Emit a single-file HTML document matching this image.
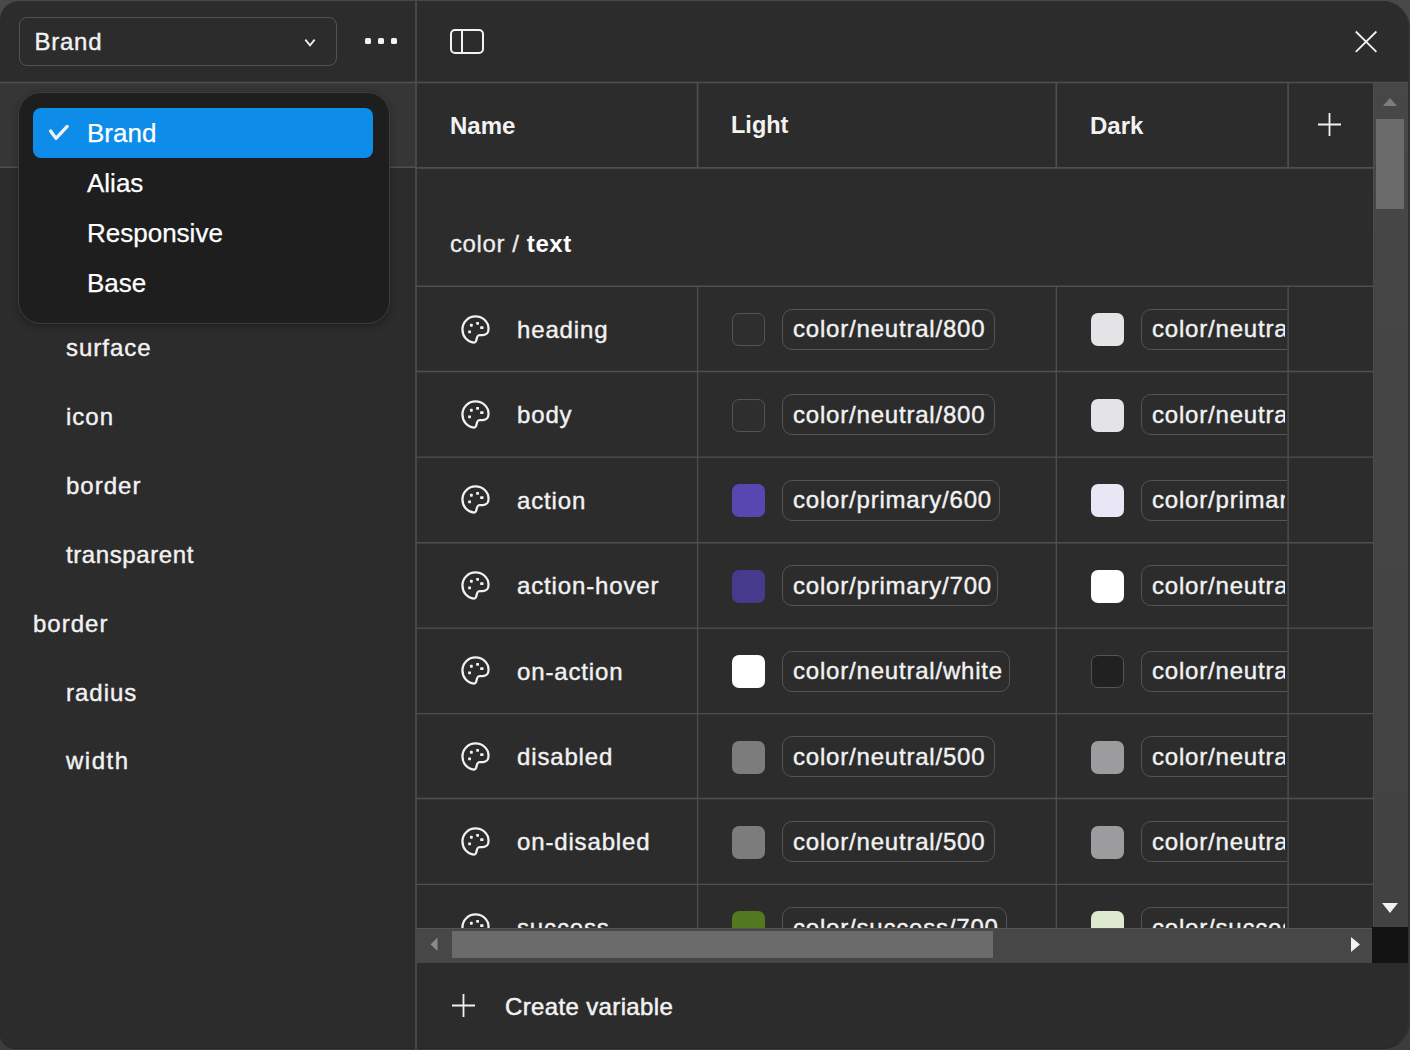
<!DOCTYPE html>
<html><head><meta charset="utf-8">
<style>
*{box-sizing:border-box;margin:0;padding:0}
html,body{width:1410px;height:1050px;overflow:hidden;background:linear-gradient(#494949,#3c3c3c)}
body{font-family:"Liberation Sans",sans-serif;color:#f2f2f2;position:relative}
.a{position:absolute}
.t{position:absolute;white-space:nowrap;line-height:1}
.txt{font-size:24px;letter-spacing:0.9px;-webkit-text-stroke:0.4px #f2f2f2}
.sw{position:absolute;width:33px;height:33px;border-radius:7px}
.pill{position:absolute;height:41px;border:1px solid #565452;border-radius:10px;overflow:hidden}
.pill span{position:absolute;left:10px;top:7.7px;font-size:24px;letter-spacing:0.8px;line-height:1;white-space:nowrap;-webkit-text-stroke:0.4px #f2f2f2}
</style></head><body>

<div class="a" style="left:0;top:1px;width:1410px;height:1048px;background:#2c2c2c;border-radius:19px 27px 27px 15px;border-right:2px solid #33312f;border-bottom:1px solid #262626"></div>
<div class="a" style="left:0;top:83px;width:416px;height:84px;background:#363636"></div>
<svg class="a" style="left:0;top:0" width="1410" height="1050"><g stroke="#4f4f4f" stroke-width="1.6"><line x1="0" y1="82.5" x2="1408" y2="82.5"/><line x1="0" y1="167.2" x2="416" y2="167.2"/><line x1="416" y1="167.9" x2="1373" y2="167.9"/><line x1="416" y1="1" x2="416" y2="1049"/><line x1="697.6" y1="83" x2="697.6" y2="167.9"/><line x1="1056.3" y1="83" x2="1056.3" y2="167.9"/><line x1="1288.1" y1="83" x2="1288.1" y2="167.9"/></g></svg>
<div class="a" style="left:19px;top:17px;width:318px;height:49px;border:1px solid #535353;border-radius:8px"></div>
<div class="t txt" style="left:34.5px;top:30px;letter-spacing:0.75px">Brand</div>
<svg class="a" style="left:303px;top:37px" width="14" height="12" viewBox="0 0 14 12"><path d="M2.3 2.6 L7 8.3 L11.7 2.6" fill="none" stroke="#f2f2f2" stroke-width="1.8"/></svg>
<div class="a" style="left:365px;top:38px;width:6px;height:6px;border-radius:1.5px;background:#f2f2f2"></div>
<div class="a" style="left:378px;top:38px;width:6px;height:6px;border-radius:1.5px;background:#f2f2f2"></div>
<div class="a" style="left:391px;top:38px;width:6px;height:6px;border-radius:1.5px;background:#f2f2f2"></div>
<div class="a" style="left:450px;top:29px;width:34px;height:25px;border:2px solid #f2f2f2;border-radius:5px"></div>
<div class="a" style="left:461px;top:30px;width:2px;height:23px;background:#f2f2f2"></div>
<svg class="a" style="left:1352px;top:28px" width="28" height="28" viewBox="0 0 28 28"><path d="M3.8 3.5 L24.4 23.9 M24.4 3.5 L3.8 23.9" stroke="#f2f2f2" stroke-width="1.8"/></svg>
<div class="t txt" style="left:66px;top:336.4px;letter-spacing:1px">surface</div>
<div class="t txt" style="left:66px;top:404.5px;letter-spacing:1px">icon</div>
<div class="t txt" style="left:66px;top:473.5px;letter-spacing:1px">border</div>
<div class="t txt" style="left:66px;top:542.7px;letter-spacing:0.6px">transparent</div>
<div class="t txt" style="left:33px;top:611.5px;letter-spacing:1px">border</div>
<div class="t txt" style="left:66px;top:680.5px;letter-spacing:1px">radius</div>
<div class="t txt" style="left:66px;top:749.3px;letter-spacing:1.5px">width</div>
<div class="t" style="left:450px;top:114px;font-size:24px;font-weight:700">Name</div>
<div class="t" style="left:731px;top:114px;font-size:23.5px;font-weight:700">Light</div>
<div class="t" style="left:1090px;top:113.5px;font-size:24px;font-weight:700">Dark</div>
<svg class="a" style="left:1316px;top:111px" width="27" height="27" viewBox="0 0 27 27"><path d="M13.5 2 V25 M2 13.5 H25" stroke="#f2f2f2" stroke-width="1.8"/></svg>
<div class="t txt" style="left:450px;top:232px;letter-spacing:0.6px;color:#eeeeee;-webkit-text-stroke:0.3px #eeeeee">color / <b style="color:#fff;-webkit-text-stroke:0">text</b></div>
<div class="a" style="left:416px;top:168px;width:957px;height:760px;overflow:hidden">
<svg class="a" style="left:0;top:0" width="957" height="760"><g stroke="#4f4f4f" stroke-width="1.35"><line x1="0" y1="118.19999999999999" x2="957" y2="118.19999999999999"/><line x1="281.6" y1="118.19999999999999" x2="281.6" y2="203.5"/><line x1="640.3" y1="118.19999999999999" x2="640.3" y2="203.5"/><line x1="872.0999999999999" y1="118.19999999999999" x2="872.0999999999999" y2="203.5"/><line x1="0" y1="203.5" x2="957" y2="203.5"/><line x1="281.6" y1="203.5" x2="281.6" y2="289.1"/><line x1="640.3" y1="203.5" x2="640.3" y2="289.1"/><line x1="872.0999999999999" y1="203.5" x2="872.0999999999999" y2="289.1"/><line x1="0" y1="289.1" x2="957" y2="289.1"/><line x1="281.6" y1="289.1" x2="281.6" y2="374.70000000000005"/><line x1="640.3" y1="289.1" x2="640.3" y2="374.70000000000005"/><line x1="872.0999999999999" y1="289.1" x2="872.0999999999999" y2="374.70000000000005"/><line x1="0" y1="374.70000000000005" x2="957" y2="374.70000000000005"/><line x1="281.6" y1="374.70000000000005" x2="281.6" y2="460.1"/><line x1="640.3" y1="374.70000000000005" x2="640.3" y2="460.1"/><line x1="872.0999999999999" y1="374.70000000000005" x2="872.0999999999999" y2="460.1"/><line x1="0" y1="460.1" x2="957" y2="460.1"/><line x1="281.6" y1="460.1" x2="281.6" y2="545.6"/><line x1="640.3" y1="460.1" x2="640.3" y2="545.6"/><line x1="872.0999999999999" y1="460.1" x2="872.0999999999999" y2="545.6"/><line x1="0" y1="545.6" x2="957" y2="545.6"/><line x1="281.6" y1="545.6" x2="281.6" y2="630.5"/><line x1="640.3" y1="545.6" x2="640.3" y2="630.5"/><line x1="872.0999999999999" y1="545.6" x2="872.0999999999999" y2="630.5"/><line x1="0" y1="630.5" x2="957" y2="630.5"/><line x1="281.6" y1="630.5" x2="281.6" y2="716.3"/><line x1="640.3" y1="630.5" x2="640.3" y2="716.3"/><line x1="872.0999999999999" y1="630.5" x2="872.0999999999999" y2="716.3"/><line x1="0" y1="716.3" x2="957" y2="716.3"/><line x1="281.6" y1="716.3" x2="281.6" y2="801.7"/><line x1="640.3" y1="716.3" x2="640.3" y2="801.7"/><line x1="872.0999999999999" y1="716.3" x2="872.0999999999999" y2="801.7"/></g></svg>
<svg class="a" style="left:44px;top:145.5px" width="31" height="31" viewBox="0 0 24 24"><path d="M10.9 22.1 C5.4 21.6 1.9 17.2 1.9 12 C1.9 6.4 6.4 1.9 12 1.9 C17.6 1.9 22.1 6.1 22.1 11.4 C22.1 14.3 20.4 16.3 17.8 16.3 H15.2 C14.2 16.3 13.6 16.9 13.3 17.8 L12.4 21 C12.1 21.8 11.6 22.1 10.9 22.1 Z" fill="none" stroke="#f2f2f2" stroke-width="1.75" stroke-linejoin="round"/><rect x="7.7" y="7.6" width="2.2" height="2.2" rx="0.6" fill="#f2f2f2"/><rect x="12.5" y="6.1" width="2.2" height="2.2" rx="0.3" fill="#f2f2f2"/><rect x="15.6" y="9.5" width="2.6" height="2.1" rx="0.3" fill="#f2f2f2"/><rect x="6.3" y="12.7" width="2.2" height="2.2" rx="0.3" fill="#f2f2f2"/></svg>
<div class="t txt" style="left:101px;top:149.6px;letter-spacing:0.85px">heading</div>
<div class="sw" style="left:316px;top:145.2px;background:#2e2e2e;border:1px solid #545454;"></div>
<div class="pill" style="left:366px;top:140.8px;width:213px"><span>color/neutral/800</span></div>
<div class="sw" style="left:675px;top:145.2px;background:#e4e4e6;"></div>
<div class="a" style="left:725px;top:140.8px;width:146px;height:41px;overflow:hidden"><div class="pill" style="left:0;top:0;width:230px"><span style="width:133px;overflow:hidden">color/neutral/800</span></div></div>
<svg class="a" style="left:44px;top:230.8px" width="31" height="31" viewBox="0 0 24 24"><path d="M10.9 22.1 C5.4 21.6 1.9 17.2 1.9 12 C1.9 6.4 6.4 1.9 12 1.9 C17.6 1.9 22.1 6.1 22.1 11.4 C22.1 14.3 20.4 16.3 17.8 16.3 H15.2 C14.2 16.3 13.6 16.9 13.3 17.8 L12.4 21 C12.1 21.8 11.6 22.1 10.9 22.1 Z" fill="none" stroke="#f2f2f2" stroke-width="1.75" stroke-linejoin="round"/><rect x="7.7" y="7.6" width="2.2" height="2.2" rx="0.6" fill="#f2f2f2"/><rect x="12.5" y="6.1" width="2.2" height="2.2" rx="0.3" fill="#f2f2f2"/><rect x="15.6" y="9.5" width="2.6" height="2.1" rx="0.3" fill="#f2f2f2"/><rect x="6.3" y="12.7" width="2.2" height="2.2" rx="0.3" fill="#f2f2f2"/></svg>
<div class="t txt" style="left:101px;top:234.9px;letter-spacing:0.85px">body</div>
<div class="sw" style="left:316px;top:230.5px;background:#2e2e2e;border:1px solid #545454;"></div>
<div class="pill" style="left:366px;top:226.1px;width:213px"><span>color/neutral/800</span></div>
<div class="sw" style="left:675px;top:230.5px;background:#e4e4e6;"></div>
<div class="a" style="left:725px;top:226.1px;width:146px;height:41px;overflow:hidden"><div class="pill" style="left:0;top:0;width:230px"><span style="width:133px;overflow:hidden">color/neutral/800</span></div></div>
<svg class="a" style="left:44px;top:316.4px" width="31" height="31" viewBox="0 0 24 24"><path d="M10.9 22.1 C5.4 21.6 1.9 17.2 1.9 12 C1.9 6.4 6.4 1.9 12 1.9 C17.6 1.9 22.1 6.1 22.1 11.4 C22.1 14.3 20.4 16.3 17.8 16.3 H15.2 C14.2 16.3 13.6 16.9 13.3 17.8 L12.4 21 C12.1 21.8 11.6 22.1 10.9 22.1 Z" fill="none" stroke="#f2f2f2" stroke-width="1.75" stroke-linejoin="round"/><rect x="7.7" y="7.6" width="2.2" height="2.2" rx="0.6" fill="#f2f2f2"/><rect x="12.5" y="6.1" width="2.2" height="2.2" rx="0.3" fill="#f2f2f2"/><rect x="15.6" y="9.5" width="2.6" height="2.1" rx="0.3" fill="#f2f2f2"/><rect x="6.3" y="12.7" width="2.2" height="2.2" rx="0.3" fill="#f2f2f2"/></svg>
<div class="t txt" style="left:101px;top:320.5px;letter-spacing:0.85px">action</div>
<div class="sw" style="left:316px;top:316.1px;background:#5847b0;"></div>
<div class="pill" style="left:366px;top:311.7px;width:218px"><span>color/primary/600</span></div>
<div class="sw" style="left:675px;top:316.1px;background:#e9e7f6;"></div>
<div class="a" style="left:725px;top:311.7px;width:146px;height:41px;overflow:hidden"><div class="pill" style="left:0;top:0;width:230px"><span style="width:133px;overflow:hidden">color/primary/100</span></div></div>
<svg class="a" style="left:44px;top:402.0px" width="31" height="31" viewBox="0 0 24 24"><path d="M10.9 22.1 C5.4 21.6 1.9 17.2 1.9 12 C1.9 6.4 6.4 1.9 12 1.9 C17.6 1.9 22.1 6.1 22.1 11.4 C22.1 14.3 20.4 16.3 17.8 16.3 H15.2 C14.2 16.3 13.6 16.9 13.3 17.8 L12.4 21 C12.1 21.8 11.6 22.1 10.9 22.1 Z" fill="none" stroke="#f2f2f2" stroke-width="1.75" stroke-linejoin="round"/><rect x="7.7" y="7.6" width="2.2" height="2.2" rx="0.6" fill="#f2f2f2"/><rect x="12.5" y="6.1" width="2.2" height="2.2" rx="0.3" fill="#f2f2f2"/><rect x="15.6" y="9.5" width="2.6" height="2.1" rx="0.3" fill="#f2f2f2"/><rect x="6.3" y="12.7" width="2.2" height="2.2" rx="0.3" fill="#f2f2f2"/></svg>
<div class="t txt" style="left:101px;top:406.1px;letter-spacing:0.85px">action-hover</div>
<div class="sw" style="left:316px;top:401.7px;background:#463a8c;"></div>
<div class="pill" style="left:366px;top:397.3px;width:216px"><span>color/primary/700</span></div>
<div class="sw" style="left:675px;top:401.7px;background:#ffffff;"></div>
<div class="a" style="left:725px;top:397.3px;width:146px;height:41px;overflow:hidden"><div class="pill" style="left:0;top:0;width:230px"><span style="width:133px;overflow:hidden">color/neutral/white</span></div></div>
<svg class="a" style="left:44px;top:487.4px" width="31" height="31" viewBox="0 0 24 24"><path d="M10.9 22.1 C5.4 21.6 1.9 17.2 1.9 12 C1.9 6.4 6.4 1.9 12 1.9 C17.6 1.9 22.1 6.1 22.1 11.4 C22.1 14.3 20.4 16.3 17.8 16.3 H15.2 C14.2 16.3 13.6 16.9 13.3 17.8 L12.4 21 C12.1 21.8 11.6 22.1 10.9 22.1 Z" fill="none" stroke="#f2f2f2" stroke-width="1.75" stroke-linejoin="round"/><rect x="7.7" y="7.6" width="2.2" height="2.2" rx="0.6" fill="#f2f2f2"/><rect x="12.5" y="6.1" width="2.2" height="2.2" rx="0.3" fill="#f2f2f2"/><rect x="15.6" y="9.5" width="2.6" height="2.1" rx="0.3" fill="#f2f2f2"/><rect x="6.3" y="12.7" width="2.2" height="2.2" rx="0.3" fill="#f2f2f2"/></svg>
<div class="t txt" style="left:101px;top:491.5px;letter-spacing:0.85px">on-action</div>
<div class="sw" style="left:316px;top:487.1px;background:#ffffff;"></div>
<div class="pill" style="left:366px;top:482.7px;width:228px"><span>color/neutral/white</span></div>
<div class="sw" style="left:675px;top:487.1px;background:#212121;border:1px solid #545454;"></div>
<div class="a" style="left:725px;top:482.7px;width:146px;height:41px;overflow:hidden"><div class="pill" style="left:0;top:0;width:230px"><span style="width:133px;overflow:hidden">color/neutral/900</span></div></div>
<svg class="a" style="left:44px;top:572.9px" width="31" height="31" viewBox="0 0 24 24"><path d="M10.9 22.1 C5.4 21.6 1.9 17.2 1.9 12 C1.9 6.4 6.4 1.9 12 1.9 C17.6 1.9 22.1 6.1 22.1 11.4 C22.1 14.3 20.4 16.3 17.8 16.3 H15.2 C14.2 16.3 13.6 16.9 13.3 17.8 L12.4 21 C12.1 21.8 11.6 22.1 10.9 22.1 Z" fill="none" stroke="#f2f2f2" stroke-width="1.75" stroke-linejoin="round"/><rect x="7.7" y="7.6" width="2.2" height="2.2" rx="0.6" fill="#f2f2f2"/><rect x="12.5" y="6.1" width="2.2" height="2.2" rx="0.3" fill="#f2f2f2"/><rect x="15.6" y="9.5" width="2.6" height="2.1" rx="0.3" fill="#f2f2f2"/><rect x="6.3" y="12.7" width="2.2" height="2.2" rx="0.3" fill="#f2f2f2"/></svg>
<div class="t txt" style="left:101px;top:577.0px;letter-spacing:0.85px">disabled</div>
<div class="sw" style="left:316px;top:572.6px;background:#7c7c7c;"></div>
<div class="pill" style="left:366px;top:568.2px;width:213px"><span>color/neutral/500</span></div>
<div class="sw" style="left:675px;top:572.6px;background:#9c9c9e;"></div>
<div class="a" style="left:725px;top:568.2px;width:146px;height:41px;overflow:hidden"><div class="pill" style="left:0;top:0;width:230px"><span style="width:133px;overflow:hidden">color/neutral/400</span></div></div>
<svg class="a" style="left:44px;top:657.8px" width="31" height="31" viewBox="0 0 24 24"><path d="M10.9 22.1 C5.4 21.6 1.9 17.2 1.9 12 C1.9 6.4 6.4 1.9 12 1.9 C17.6 1.9 22.1 6.1 22.1 11.4 C22.1 14.3 20.4 16.3 17.8 16.3 H15.2 C14.2 16.3 13.6 16.9 13.3 17.8 L12.4 21 C12.1 21.8 11.6 22.1 10.9 22.1 Z" fill="none" stroke="#f2f2f2" stroke-width="1.75" stroke-linejoin="round"/><rect x="7.7" y="7.6" width="2.2" height="2.2" rx="0.6" fill="#f2f2f2"/><rect x="12.5" y="6.1" width="2.2" height="2.2" rx="0.3" fill="#f2f2f2"/><rect x="15.6" y="9.5" width="2.6" height="2.1" rx="0.3" fill="#f2f2f2"/><rect x="6.3" y="12.7" width="2.2" height="2.2" rx="0.3" fill="#f2f2f2"/></svg>
<div class="t txt" style="left:101px;top:661.9px;letter-spacing:0.85px">on-disabled</div>
<div class="sw" style="left:316px;top:657.5px;background:#7c7c7c;"></div>
<div class="pill" style="left:366px;top:653.1px;width:213px"><span>color/neutral/500</span></div>
<div class="sw" style="left:675px;top:657.5px;background:#9c9c9e;"></div>
<div class="a" style="left:725px;top:653.1px;width:146px;height:41px;overflow:hidden"><div class="pill" style="left:0;top:0;width:230px"><span style="width:133px;overflow:hidden">color/neutral/400</span></div></div>
<svg class="a" style="left:44px;top:743.6px" width="31" height="31" viewBox="0 0 24 24"><path d="M10.9 22.1 C5.4 21.6 1.9 17.2 1.9 12 C1.9 6.4 6.4 1.9 12 1.9 C17.6 1.9 22.1 6.1 22.1 11.4 C22.1 14.3 20.4 16.3 17.8 16.3 H15.2 C14.2 16.3 13.6 16.9 13.3 17.8 L12.4 21 C12.1 21.8 11.6 22.1 10.9 22.1 Z" fill="none" stroke="#f2f2f2" stroke-width="1.75" stroke-linejoin="round"/><rect x="7.7" y="7.6" width="2.2" height="2.2" rx="0.6" fill="#f2f2f2"/><rect x="12.5" y="6.1" width="2.2" height="2.2" rx="0.3" fill="#f2f2f2"/><rect x="15.6" y="9.5" width="2.6" height="2.1" rx="0.3" fill="#f2f2f2"/><rect x="6.3" y="12.7" width="2.2" height="2.2" rx="0.3" fill="#f2f2f2"/></svg>
<div class="t txt" style="left:101px;top:747.7px;letter-spacing:0.85px">success</div>
<div class="sw" style="left:316px;top:743.3px;background:#52791f;"></div>
<div class="pill" style="left:366px;top:738.9px;width:225px"><span>color/success/700</span></div>
<div class="sw" style="left:675px;top:743.3px;background:#dfe9d0;"></div>
<div class="a" style="left:725px;top:738.9px;width:146px;height:41px;overflow:hidden"><div class="pill" style="left:0;top:0;width:230px"><span style="width:133px;overflow:hidden">color/success/100</span></div></div>
</div>
<div class="a" style="left:1373px;top:83px;width:35px;height:845px;background:linear-gradient(#474747,#424242);border-left:1px solid #4b4b4b"></div>
<svg class="a" style="left:1380px;top:94px" width="20" height="14" viewBox="0 0 20 14"><path d="M3 12 L10 4 L17 12 Z" fill="#7d7d7d"/></svg>
<div class="a" style="left:1376px;top:119px;width:28px;height:90px;background:#6b6b6b"></div>
<svg class="a" style="left:1380px;top:901px" width="20" height="14" viewBox="0 0 20 14"><path d="M2 2 L18 2 L10 12 Z" fill="#f2f2f2"/></svg>
<div class="a" style="left:416px;top:928px;width:957px;height:35px;background:#474747;border-top:1px solid #555;border-bottom:1px solid #4a4340"></div>
<svg class="a" style="left:428px;top:935px" width="12" height="18" viewBox="0 0 12 18"><path d="M9.5 2.5 L2.5 9.5 L9.5 16 Z" fill="#8a8a92"/></svg>
<div class="a" style="left:452px;top:931px;width:541px;height:27px;background:#6b6b6b"></div>
<svg class="a" style="left:1349px;top:935px" width="14" height="19" viewBox="0 0 14 19"><path d="M2 2 L11 9.5 L2 17 Z" fill="#f2f2f2"/></svg>
<div class="a" style="left:1372px;top:927px;width:36px;height:36px;background:#131313"></div>
<svg class="a" style="left:450px;top:992px" width="27" height="27" viewBox="0 0 27 27"><path d="M13.5 2 V25 M2 13.5 H25" stroke="#f2f2f2" stroke-width="1.8"/></svg>
<div class="t txt" style="left:505px;top:994.5px;letter-spacing:0.36px;-webkit-text-stroke:0.5px #f2f2f2">Create variable</div>
<div class="a" style="left:18px;top:92px;width:372px;height:232px;background:#1e1e1e;border:1px solid #3d3d3d;border-radius:23px;box-shadow:0 2px 8px rgba(0,0,0,.3)"></div>
<div class="a" style="left:33px;top:108px;width:340px;height:50px;background:#0d8ce9;border-radius:8px"></div>
<svg class="a" style="left:46px;top:121px" width="26" height="22" viewBox="0 0 26 22"><path d="M4.6 10 L10 17.4 L21.2 5.4" fill="none" stroke="#f2f2f2" stroke-width="3.3" stroke-linecap="round" stroke-linejoin="round"/></svg>
<div class="t" style="left:87px;top:120px;font-size:26px;color:#fff;-webkit-text-stroke:0.25px #fff">Brand</div>
<div class="t" style="left:87px;top:170px;font-size:26px;color:#fff;-webkit-text-stroke:0.25px #fff">Alias</div>
<div class="t" style="left:87px;top:220px;font-size:26px;color:#fff;-webkit-text-stroke:0.25px #fff">Responsive</div>
<div class="t" style="left:87px;top:270px;font-size:26px;color:#fff;-webkit-text-stroke:0.25px #fff">Base</div>
</body></html>
